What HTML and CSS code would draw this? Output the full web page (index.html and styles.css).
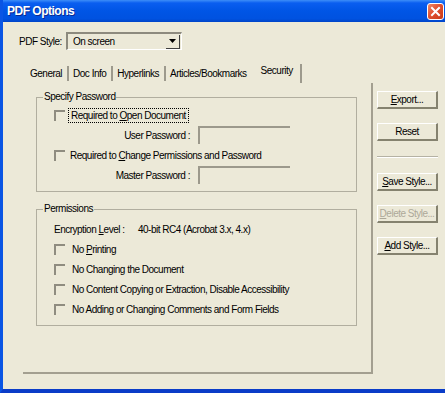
FILE: index.html
```html
<!DOCTYPE html>
<html lang="en">
<head>
	<meta charset="UTF-8">
	<title>PDF Options</title>
	<link rel="stylesheet" href="styles.css">
</head>
<body>
<div class="window">
	<div class="titlebar">
		<span class="title">PDF Options</span>
		<span class="close">
			<svg width="11" height="11" viewBox="0 0 11 11">
				<path d="M2 2 L9 9 M9 2 L2 9" stroke="#fff" stroke-width="2" stroke-linecap="square"/>
			</svg>
		</span>
	</div>
	<div class="body">
		<div class="style-row">
			<label class="style-label">PDF Style:</label>
			<div class="select">
				<span class="select-text">On screen</span>
				<span class="select-arrow">
					<svg width="7" height="4" viewBox="0 0 7 4"><path d="M0 0 H7 L3.5 4 Z" fill="#000"/></svg>
				</span>
			</div>
		</div>
		<div class="main">
			<div class="tabarea">
				<div class="tabs">
					<span class="tab">General</span>
					<span class="tab">Doc Info</span>
					<span class="tab">Hyperlinks</span>
					<span class="tab tab-plain">Articles/Bookmarks</span>
					<span class="tab tab-active">Security</span>
				</div>
				<div class="panel">
					<fieldset class="group group-password">
						<legend>Specify Password</legend>
						<div class="row">
							<span class="check"></span>
							<span class="focus">Required to <u>O</u>pen Document</span>
						</div>
						<div class="row">
							<span class="field-label">User Password :</span>
							<span class="textbox"></span>
						</div>
						<div class="row">
							<span class="check"></span>
							<span class="check-text">Required to <u>C</u>hange Permissions and Password</span>
						</div>
						<div class="row">
							<span class="field-label">Master Password :</span>
							<span class="textbox"></span>
						</div>
					</fieldset>
					<fieldset class="group group-perms">
						<legend>Permissions</legend>
						<div class="row">
							<span class="enc-label">Encryption <u>L</u>evel :</span>
							<span>40-bit RC4 (Acrobat 3.x, 4.x)</span>
						</div>
						<div class="row">
							<span class="check"></span>
							<span class="check-text wide">No <u>P</u>rinting</span>
						</div>
						<div class="row">
							<span class="check"></span>
							<span class="check-text wide">No Changing the Document</span>
						</div>
						<div class="row">
							<span class="check"></span>
							<span class="check-text wide">No Content Copying or Extraction, Disable Accessibility</span>
						</div>
						<div class="row">
							<span class="check"></span>
							<span class="check-text wide">No Adding or Changing Comments and Form Fields</span>
						</div>
					</fieldset>
				</div>
			</div>
			<div class="side">
				<button class="btn"><u>E</u>xport...</button>
				<button class="btn">Reset</button>
				<div class="side-sep"></div>
				<button class="btn"><u>S</u>ave Style...</button>
				<button class="btn btn-disabled"><u>D</u>elete Style...</button>
				<button class="btn"><u>A</u>dd Style...</button>
			</div>
		</div>
	</div>
</div>
</body>
</html>
```

FILE: styles.css
```css
* {
	padding: 0;
	margin: 0;
	box-sizing: border-box;
}

body {
	font-family: "Liberation Sans", Arial, sans-serif;
	font-size: 10px;
	letter-spacing: -0.5px;
	color: #000;
	background: #ece9d8;
}

.window {
	width: 445px;
	height: 393px;
	background: #ece9d8;
	border-left: 3px solid #0a55e4;
	border-bottom: 4px solid #0a3cc8;
	display: flex;
	flex-direction: column;
}

.titlebar {
	height: 22px;
	background: linear-gradient(#3d8ef8 0, #0a5ef0 3px, #0055e5 50%, #0052e0 85%, #0044c8 100%);
	display: flex;
	align-items: center;
	padding-left: 4px;
	padding-right: 1px;
}

.title {
	color: #fff;
	font-weight: bold;
	font-size: 12px;
	letter-spacing: -0.5px;
	flex: 1;
	text-shadow: 1px 1px 0 #0a2a90;
}

.close {
	width: 17px;
	height: 17px;
	border: 1px solid #fff;
	border-radius: 3px;
	background: linear-gradient(135deg, #f08a6a, #e05030 45%, #c83a18);
	display: flex;
	align-items: center;
	justify-content: center;
}

.body {
	flex: 1;
	padding-top: 10px;
}

.style-row {
	display: flex;
	align-items: center;
	height: 18px;
	padding-left: 16px;
}

.style-label {
	width: 47px;
}

.select {
	width: 116px;
	height: 18px;
	border-top: 2px solid #8d8a7e;
	border-left: 2px solid #8d8a7e;
	border-right: 1px solid #fff;
	border-bottom: 1px solid #fff;
	display: flex;
	align-items: center;
	justify-content: space-between;
}

.select-text {
	padding-left: 5px;
}

.select-arrow {
	width: 14px;
	height: 14px;
	margin-right: 1px;
	border-right: 1px solid #404040;
	border-bottom: 1px solid #404040;
	display: flex;
	align-items: center;
	justify-content: center;
}

.main {
	display: flex;
	margin-top: 13px;
	padding-left: 20px;
}

.tabarea {
	width: 350px;
}

.tabs {
	height: 20px;
	display: flex;
	align-items: center;
	padding-left: 2px;
}

.tab {
	height: 15px;
	line-height: 15px;
	padding: 0 5px 0 4px;
	border-right: 2px solid #9d9a8d;
}

.tab:first-child {
	padding-left: 5px;
}

.tab-plain {
	border-right: none;
	padding-right: 10px;
}

.tab-active {
	height: 19px;
	line-height: 13px;
	padding-right: 7px;
	padding-bottom: 6px;
}

.panel {
	height: 291px;
	border-right: 2px solid #a39f90;
	border-bottom: 2px solid #a39f90;
	padding: 8px 14px 0 13px;
}

.group {
	width: 321px;
	border: 1px solid #b1ae9f;
	padding: 0 0 0 17px;
}

.group legend {
	padding: 0 1px;
	margin-left: -11px;
	line-height: 12px;
}

.group-password {
	height: 101px;
	padding-top: 2px;
}

.group-perms {
	height: 123px;
	margin-top: 11px;
	padding-top: 4px;
}

.row {
	height: 20px;
	display: flex;
	align-items: center;
}

.check {
	width: 11px;
	height: 11px;
	border-top: 2px solid #8f8c80;
	border-left: 2px solid #8f8c80;
	margin-right: 5px;
}

.group-perms .check {
	margin-right: 7px;
}

.focus {
	outline: 1px dotted #000;
	outline-offset: 1px;
	padding: 0 1px;
}

.field-label {
	width: 136px;
	text-align: right;
	margin-right: 8px;
}

.textbox {
	width: 92px;
	height: 18px;
	border-top: 2px solid #9c998c;
	border-left: 2px solid #9c998c;
}

.enc-label {
	width: 84px;
}

.side {
	width: 61px;
	margin-left: 4px;
	padding-top: 28px;
	display: flex;
	flex-direction: column;
}

.btn {
	height: 18px;
	font-family: inherit;
	font-size: 10px;
	letter-spacing: -0.5px;
	background: #ece9d8;
	border: none;
	border-top: 1px solid #fff;
	border-left: 1px solid #fff;
	border-right: 2px solid #85826f;
	border-bottom: 2px solid #85826f;
	color: #000;
	margin-bottom: 14px;
}

.btn-disabled {
	color: #aca899;
}

.side-sep {
	height: 2px;
	border-top: 1px solid #b5b2a4;
	border-bottom: 1px solid #fff;
	margin: 1px 0 15px;
}
```
